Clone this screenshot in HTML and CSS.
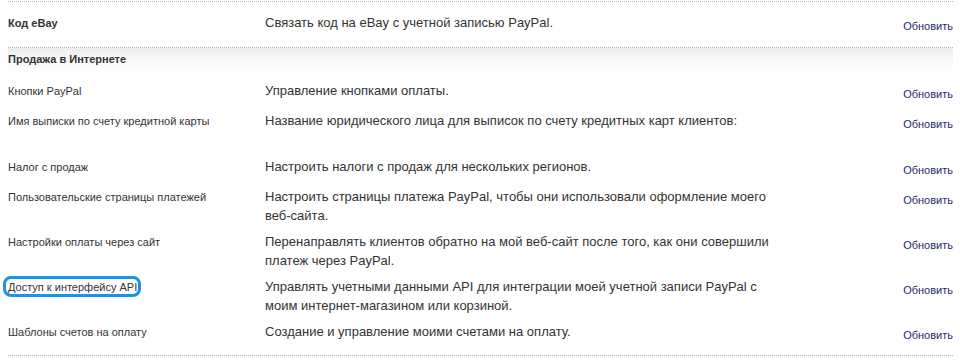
FILE: index.html
```html
<!DOCTYPE html>
<html lang="ru">
<head>
<meta charset="utf-8">
<title>Профиль — Продажа в Интернете</title>
<link rel="stylesheet" href="styles.css">
</head>
<body>
<div class="wrap">
  <div class="row row--top">
    <div class="label label--bold">Код eBay</div>
    <div class="desc">Связать код на eBay с учетной записью PayPal.</div>
    <div class="action"><a href="#">Обновить</a></div>
  </div>
  <div class="section">
    <div class="section-head">Продажа в Интернете</div>
    <div class="section-body">
      <div class="row">
        <div class="label">Кнопки PayPal</div>
        <div class="desc">Управление кнопками оплаты.</div>
        <div class="action"><a href="#">Обновить</a></div>
      </div>
      <div class="row row--extra">
        <div class="label">Имя выписки по счету кредитной карты</div>
        <div class="desc">Название юридического лица для выписок по счету кредитных карт клиентов:</div>
        <div class="action"><a href="#">Обновить</a></div>
      </div>
      <div class="row">
        <div class="label">Налог с продаж</div>
        <div class="desc">Настроить налоги с продаж для нескольких регионов.</div>
        <div class="action"><a href="#">Обновить</a></div>
      </div>
      <div class="row">
        <div class="label">Пользовательские страницы платежей</div>
        <div class="desc">Настроить страницы платежа PayPal, чтобы они использовали оформление моего веб-сайта.</div>
        <div class="action"><a href="#">Обновить</a></div>
      </div>
      <div class="row">
        <div class="label">Настройки оплаты через сайт</div>
        <div class="desc">Перенаправлять клиентов обратно на мой веб-сайт после того, как они совершили платеж через PayPal.</div>
        <div class="action"><a href="#">Обновить</a></div>
      </div>
      <div class="row">
        <div class="label"><span class="highlight">Доступ к интерфейсу API</span></div>
        <div class="desc">Управлять учетными данными API для интеграции моей учетной записи PayPal с моим интернет-магазином или корзиной.</div>
        <div class="action"><a href="#">Обновить</a></div>
      </div>
      <div class="row">
        <div class="label">Шаблоны счетов на оплату</div>
        <div class="desc">Создание и управление моими счетами на оплату.</div>
        <div class="action"><a href="#">Обновить</a></div>
      </div>
    </div>
  </div>
</div>
</body>
</html>
```

FILE: styles.css
```css
html, body {
  margin: 0;
  padding: 0;
  background: #ffffff;
}

body {
  font-family: "Liberation Sans", Arial, Helvetica, sans-serif;
  color: #333333;
}

.wrap {
  margin: 1px 7px 0 8px;
  border-top: 1px dotted #b8b8b8;
}

.row {
  display: flex;
  align-items: flex-start;
  box-sizing: border-box;
  min-height: 30px;
  padding: 4px 0;
  line-height: 18px;
}

.row--top {
  padding: 12px 0 12px;
  border-bottom: 1px dotted #b8b8b8;
}

.row--extra {
  min-height: 46px;
}

.label {
  flex: 0 0 257px;
  font-size: 11px;
  color: #333333;
}

.label--bold {
  font-weight: bold;
}

.desc {
  flex: 0 0 522px;
  font-size: 13px;
  line-height: 18.5px;
  color: #333333;
}

.action {
  flex: 1 1 auto;
  text-align: right;
  font-size: 11px;
  padding-top: 3px;
}

.action a {
  color: #1f2a6b;
  text-decoration: none;
}

.section {
  border-bottom: 1px dotted #b8b8b8;
}

.section-head {
  padding: 2px 0 10px;
  line-height: 18px;
  font-size: 11px;
  font-weight: bold;
  color: #333333;
  background: linear-gradient(to bottom, #ececec 0px, #f7f7f7 10px, #ffffff 26px);
}

.section-body {
  padding-bottom: 6px;
}

.highlight {
  position: relative;
}

.highlight::after {
  content: "";
  position: absolute;
  left: -5px;
  right: -4px;
  top: -5px;
  bottom: -4px;
  border: 3px solid #1a94e8;
  border-radius: 8px;
}
```
